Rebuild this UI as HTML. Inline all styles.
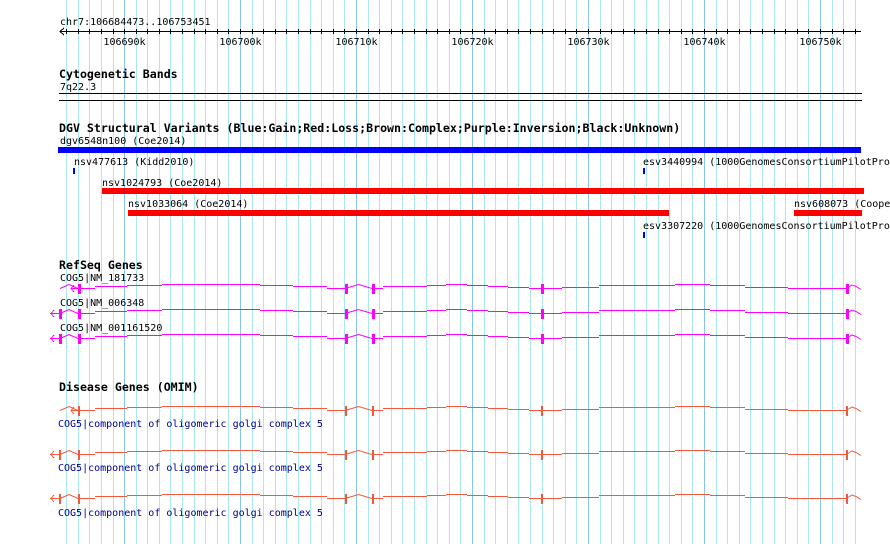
<!DOCTYPE html>
<html><head><meta charset="utf-8"><style>
html,body{margin:0;padding:0;background:#fff;}
#c{position:relative;width:890px;height:544px;overflow:hidden;background:#fff;}
svg{position:absolute;left:0;top:0;}
text{font-family:"DejaVu Sans Mono","Liberation Mono",monospace;font-size:10px;}
.b{font-weight:bold;font-size:11.6px;}
</style></head><body><div id="c"><svg id="s" width="890" height="544" shape-rendering="crispEdges"></svg></div>
<script>
var s=document.getElementById('s'),h='';
function X(bp){return 60+(bp-106684473)*800/68978;}
for(var k=106685;k<=106753;k++){var x=Math.round(X(k*1000))+0.5;var maj=(k%10==0);
h+='<line x1="'+x+'" y1="0" x2="'+x+'" y2="544" stroke="'+(maj?'#88c4ec':'#aae8ee')+'" stroke-width="1"/>';}
h+='<text x="60" y="25">chr7:106684473..106753451</text>';
h+='<line x1="60" y1="31.5" x2="861" y2="31.5" stroke="#000"/>';
h+='<polyline points="64,28 60,31.5 64,35" fill="none" stroke="#000"/>';
for(var k=106685;k<=106753;k++){var x=Math.round(X(k*1000))+0.5;h+='<line x1="'+x+'" y1="29" x2="'+x+'" y2="34" stroke="#000"/>';
if(k%10==0)h+='<text x="'+x+'" y="45" text-anchor="middle">'+k+'k</text>';}
h+='<text class="b" x="59" y="78">Cytogenetic Bands</text><text x="60" y="90">7q22.3</text>';
h+='<rect x="59" y="93" width="803" height="1" fill="#000"/><rect x="59" y="100" width="803" height="1" fill="#000"/>';
h+='<text class="b" x="59" y="132">DGV Structural Variants (Blue:Gain;Red:Loss;Brown:Complex;Purple:Inversion;Black:Unknown)</text>';
h+='<text x="60" y="144">dgv6548n100 (Coe2014)</text><rect x="58" y="147" width="803" height="6" fill="#0000ff"/>';
h+='<text x="74" y="165">nsv477613 (Kidd2010)</text><rect x="73" y="168" width="2" height="6" fill="#0000ff"/>';
h+='<text x="643" y="165">esv3440994 (1000GenomesConsortiumPilotPro,</text><rect x="643" y="168" width="2" height="6" fill="#0000ff"/>';
h+='<text x="102" y="186">nsv1024793 (Coe2014)</text><rect x="102" y="188" width="762" height="6" fill="#ff0000"/>';
h+='<text x="128" y="207">nsv1033064 (Coe2014)</text><rect x="128" y="210" width="541" height="6" fill="#ff0000"/>';
h+='<text x="794" y="207">nsv608073 (Coope</text><rect x="794" y="210" width="68" height="6" fill="#ff0000"/>';
h+='<text x="643" y="229">esv3307220 (1000GenomesConsortiumPilotPro,</text><rect x="643" y="232" width="2" height="6" fill="#0000ff"/>';
var prof=[[78,95,0],[95,127,-2],[127,162,-3],[162,260,-4],[260,293,-3],[293,327,-2],[327,345,0],
[372,383,0],[383,427,-2],[427,446,-3.5],[446,467,-4],[467,488,-3],[488,508,-2],[508,529,-1],[529,541,0],
[541,562,0],[562,599,-1],[599,675,-3],[675,710,-4],[710,745,-3],[745,788,-1],[788,846,0]];
function gene(y,col,arr,tw){
 for(var i=0;i<prof.length;i++){var a=prof[i];var yy=Math.round(y+a[2])+0.5;
  h+='<line x1="'+a[0]+'" y1="'+yy+'" x2="'+a[1]+'" y2="'+yy+'" stroke="'+col+'"/>';}
 function hat(a,b){h+='<polyline shape-rendering="auto" points="'+a+','+(y+0.5)+' '+((a+b)/2)+','+(y-3.5)+' '+b+','+(y+0.5)+'" fill="none" stroke="'+col+'"/>';}
 hat(60,78);hat(345,372);
 h+='<polyline shape-rendering="auto" points="846,'+(y+0.5)+' 852,'+(y-3)+' 856,'+(y-1.5)+' 861,'+(y+1.5)+'" fill="none" stroke="'+col+'"/>';
 if(arr==1){h+='<polyline points="74,'+(y-3)+' 71,'+(y+0.5)+' 74,'+(y+4)+'" fill="none" stroke="'+col+'"/><line x1="71" y1="'+(y+0.5)+'" x2="78" y2="'+(y+0.5)+'" stroke="'+col+'"/>';}
 else{h+='<line x1="50" y1="'+(y+0.5)+'" x2="60" y2="'+(y+0.5)+'" stroke="'+col+'"/><polyline points="54,'+(y-3)+' 51,'+(y+0.5)+' 54,'+(y+4)+'" fill="none" stroke="'+col+'"/>';
  h+='<rect x="59" y="'+(y-4)+'" width="'+tw+'" height="10" fill="'+col+'"/>';}
 [78,345,372,541,846].forEach(function(x){h+='<rect x="'+x+'" y="'+(y-4)+'" width="'+tw+'" height="10" fill="'+col+'"/>';});
}
h+='<text class="b" x="59" y="269">RefSeq Genes</text>';
h+='<text x="60" y="281">COG5|NM_181733</text><text x="60" y="306">COG5|NM_006348</text><text x="60" y="331">COG5|NM_001161520</text>';
gene(288,'#ff00ff',1,3);gene(313,'#ff00ff',0,3);gene(338,'#ff00ff',0,3);
h+='<text class="b" x="59" y="391">Disease Genes (OMIM)</text>';
var R='#f4583c';
gene(410,R,1,2);gene(454,R,0,2);gene(498,R,0,2);
['427','471','516'].forEach(function(y){h+='<text x="58" y="'+y+'" fill="#00008b">COG5|component of oligomeric golgi complex 5</text>';});
s.innerHTML=h;
</script></body></html>
